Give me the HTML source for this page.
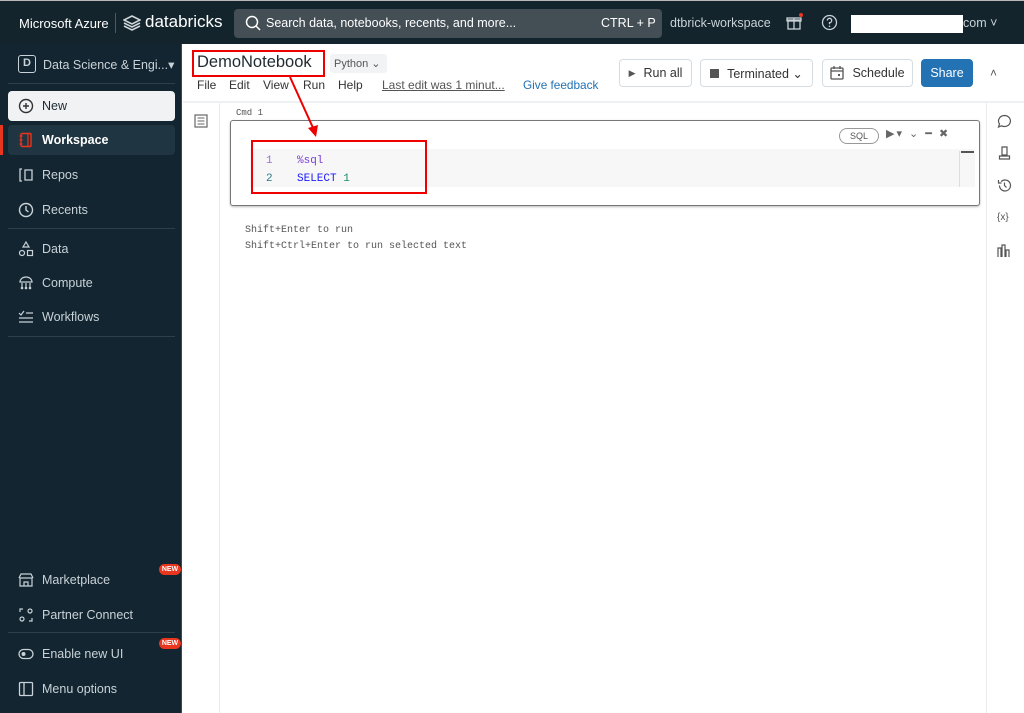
<!DOCTYPE html>
<html><head><meta charset="utf-8"><style>
*{margin:0;padding:0;box-sizing:border-box}
body{width:1024px;height:713px;overflow:hidden;background:#fff;font-family:"Liberation Sans",sans-serif;position:relative}
.a{position:absolute}
.top{left:0;top:0;width:1024px;height:44px;background:#13242c;border-top:1px solid #b8b8b8}
.side{left:0;top:44px;width:182px;height:669px;background:#132530;border-right:1px solid #3a4a52}
.si{position:absolute;left:8px;width:167px;height:30px;color:#c9d2d8;font-size:12.5px;display:flex;align-items:center;padding-left:10px;gap:8px}
.si svg{width:16px;height:16px;flex:none}
.hr{position:absolute;left:8px;width:167px;height:1px;background:#2d3f48}
.btn{position:absolute;top:59px;height:28px;border:1px solid #d6dde2;border-radius:4px;font-size:12.5px;color:#333;display:flex;align-items:center;justify-content:center;gap:8px;background:#fff}
.mono{font-family:"Liberation Mono",monospace}
.new{position:absolute;left:159px;width:22px;height:11px;background:#e8361f;border-radius:6px;color:#fff;font-size:7px;font-weight:bold;text-align:center;line-height:11px}
</style></head><body>
<div class="a top">
 <div class="a" style="left:19px;top:15px;color:#fff;font-size:13px">Microsoft Azure</div>
 <div class="a" style="left:115px;top:12px;width:1px;height:20px;background:#4a5a62"></div>
 <svg class="a" style="left:123px;top:14px" width="18" height="17" viewBox="0 0 18 17"><path d="M9 1 L17 5 L9 9 L1 5Z M1 8 L9 12 L17 8 M1 11 L9 15 L17 11" fill="none" stroke="#cfd6da" stroke-width="1.6"/></svg>
 <div class="a" style="left:145px;top:11px;color:#fff;font-size:17px">databricks</div>
 <div class="a" style="left:234px;top:8px;width:428px;height:29px;background:#434e55;border-radius:4px"></div>
 <svg class="a" style="left:245px;top:14px" width="16" height="16" viewBox="0 0 16 16"><circle cx="7" cy="7" r="5.5" fill="none" stroke="#fff" stroke-width="1.5"/><path d="M11 11l4 4" stroke="#fff" stroke-width="1.5"/></svg>
 <div class="a" style="left:266px;top:15px;color:#fff;font-size:12.5px">Search data, notebooks, recents, and more...</div>
 <div class="a" style="left:601px;top:15px;color:#fff;font-size:12.5px">CTRL + P</div>
 <div class="a" style="left:670px;top:15px;color:#c9d2d8;font-size:12.5px">dtbrick-workspace</div>
 <svg class="a" style="left:786px;top:13px" width="16" height="17" viewBox="0 0 16 17"><rect x="2" y="6" width="12" height="9" fill="none" stroke="#c9d2d8" stroke-width="1.3"/><rect x="1" y="4" width="14" height="3" fill="none" stroke="#c9d2d8" stroke-width="1.3"/><path d="M8 4v11" stroke="#c9d2d8" stroke-width="1.3"/></svg>
 <div class="a" style="left:799px;top:12px;width:4px;height:4px;border-radius:2px;background:#e8361f"></div>
 <svg class="a" style="left:821px;top:13px" width="17" height="17" viewBox="0 0 17 17"><circle cx="8.5" cy="8.5" r="7" fill="none" stroke="#c9d2d8" stroke-width="1.3"/><path d="M6.3 6.5a2.2 2.2 0 1 1 2.2 2.2v1.5" fill="none" stroke="#c9d2d8" stroke-width="1.3"/><circle cx="8.5" cy="12.3" r=".8" fill="#c9d2d8"/></svg>
 <div class="a" style="left:851px;top:14px;width:112px;height:18px;background:#fff"></div>
 <div class="a" style="left:963px;top:15px;color:#c9d2d8;font-size:12.5px">com ˅</div>
</div>
<div class="a side">
 <div class="a" style="left:18px;top:11px;width:18px;height:18px;border:1.5px solid #c9d2d8;border-radius:3px;color:#c9d2d8;font-size:11px;font-weight:bold;text-align:center;line-height:15px">D</div>
 <div class="a" style="left:43px;top:13px;color:#c9d2d8;font-size:12.5px">Data Science &amp; Engi...▾</div>
 <div class="hr" style="top:39px"></div>
 <div class="si" style="top:47px;background:#f0f2f4;color:#1b2a32;border-radius:4px"><svg viewBox="0 0 16 16"><circle cx="8" cy="8" r="6.5" fill="none" stroke="#333" stroke-width="1.4"/><path d="M8 5v6M5 8h6" stroke="#333" stroke-width="1.4"/></svg>New</div>
 <div class="a" style="left:0;top:81px;width:3px;height:30px;background:#e8361f"></div>
 <div class="si" style="top:81px;background:#1f3541;color:#fff;font-weight:bold;border-radius:4px"><svg viewBox="0 0 16 16"><rect x="3" y="1.5" width="10" height="13" rx="1" fill="none" stroke="#e8361f" stroke-width="1.4"/><path d="M1.5 4h3M1.5 8h3M1.5 12h3M10 2v12" stroke="#e8361f" stroke-width="1.2"/></svg>Workspace</div>
 <div class="si" style="top:116px"><svg viewBox="0 0 16 16"><path d="M4 2H2v12h2M7 3h7v10H7z" fill="none" stroke="#c9d2d8" stroke-width="1.3"/></svg>Repos</div>
 <div class="si" style="top:151px"><svg viewBox="0 0 16 16"><circle cx="8" cy="8" r="6.5" fill="none" stroke="#c9d2d8" stroke-width="1.4"/><path d="M8 4v4l2.5 2" fill="none" stroke="#c9d2d8" stroke-width="1.4"/></svg>Recents</div>
 <div class="hr" style="top:184px"></div>
 <div class="si" style="top:190px"><svg viewBox="0 0 16 16"><path d="M8 1l3 5H5z" fill="none" stroke="#c9d2d8" stroke-width="1.2"/><circle cx="4" cy="12" r="2.5" fill="none" stroke="#c9d2d8" stroke-width="1.2"/><rect x="9.5" y="9.5" width="5" height="5" fill="none" stroke="#c9d2d8" stroke-width="1.2"/></svg>Data</div>
 <div class="si" style="top:224px"><svg viewBox="0 0 16 16"><path d="M2 7a6 5 0 0 1 12 0zM4 8v4M8 8v4M12 8v4" fill="none" stroke="#c9d2d8" stroke-width="1.2"/><circle cx="4" cy="13" r="1.3" fill="#c9d2d8"/><circle cx="8" cy="13" r="1.3" fill="#c9d2d8"/><circle cx="12" cy="13" r="1.3" fill="#c9d2d8"/></svg>Compute</div>
 <div class="si" style="top:258px"><svg viewBox="0 0 16 16"><path d="M1 4l2 2 3-4M8 4h7M1 9h14M1 13h14" fill="none" stroke="#c9d2d8" stroke-width="1.2"/></svg>Workflows</div>
 <div class="hr" style="top:292px"></div>
 <div class="si" style="top:521px"><svg viewBox="0 0 16 16"><path d="M2 6h12v8H2zM1 6l2-4h10l2 4M6 14v-4h4v4" fill="none" stroke="#c9d2d8" stroke-width="1.2"/></svg>Marketplace</div>
 <div class="new" style="top:520px">NEW</div>
 <div class="si" style="top:556px"><svg viewBox="0 0 16 16"><path d="M2 5V2h3M11 14h3v-3" fill="none" stroke="#c9d2d8" stroke-width="1.2"/><circle cx="4" cy="12" r="2" fill="none" stroke="#c9d2d8" stroke-width="1.2"/><circle cx="12" cy="4" r="2" fill="none" stroke="#c9d2d8" stroke-width="1.2"/></svg>Partner Connect</div>
 <div class="hr" style="top:588px"></div>
 <div class="si" style="top:595px"><svg viewBox="0 0 16 16"><rect x="1" y="3.5" width="14" height="9" rx="4.5" fill="none" stroke="#c9d2d8" stroke-width="1.3"/><circle cx="5.5" cy="8" r="2" fill="#c9d2d8"/></svg>Enable new UI</div>
 <div class="new" style="top:594px">NEW</div>
 <div class="si" style="top:630px"><svg viewBox="0 0 16 16"><rect x="1.5" y="1.5" width="13" height="13" rx="1" fill="none" stroke="#c9d2d8" stroke-width="1.3"/><path d="M6 1.5v13" stroke="#c9d2d8" stroke-width="1.3"/></svg>Menu options</div>
</div>
<!-- header -->
<div class="a" style="left:183px;top:101px;width:841px;height:2px;background:#eef1f3"></div>
<div class="a" style="left:197px;top:53px;font-size:16.5px;color:#1f2a30">DemoNotebook</div>
<div class="a" style="left:192px;top:50px;width:133px;height:27px;border:2px solid #e00"></div>
<div class="a" style="left:330px;top:54px;width:57px;height:19px;background:#f1f3f4;border-radius:3px;font-size:11px;color:#555;padding:3px 4px">Python ⌄</div>
<div class="a" style="left:197px;top:78px;font-size:12px;color:#333">File</div>
<div class="a" style="left:229px;top:78px;font-size:12px;color:#333">Edit</div>
<div class="a" style="left:263px;top:78px;font-size:12px;color:#333">View</div>
<div class="a" style="left:303px;top:78px;font-size:12px;color:#333">Run</div>
<div class="a" style="left:338px;top:78px;font-size:12px;color:#333">Help</div>
<div class="a" style="left:382px;top:78px;font-size:12px;color:#555;text-decoration:underline">Last edit was 1 minut...</div>
<div class="a" style="left:523px;top:78px;font-size:11.8px;color:#2272b4">Give feedback</div>
<div class="btn" style="left:619px;width:73px"><span style="font-size:9px;color:#555">▶</span>Run all</div>
<div class="btn" style="left:700px;width:113px"><span style="display:inline-block;width:9px;height:9px;background:#555"></span>Terminated ⌄</div>
<div class="btn" style="left:822px;width:91px"><svg width="14" height="14" viewBox="0 0 14 14"><rect x="1" y="2" width="12" height="11" rx="1" fill="none" stroke="#555" stroke-width="1.3"/><path d="M1 5h12M4 0v3M10 0v3" stroke="#555" stroke-width="1.3"/><rect x="8" y="8" width="2" height="2" fill="#555"/></svg>Schedule</div>
<div class="btn" style="left:921px;width:52px;background:#2272b4;border-color:#2272b4;color:#fff">Share</div>
<div class="a" style="left:990px;top:66px;font-size:12px;color:#555">˄</div>
<!-- gutters -->
<div class="a" style="left:219px;top:103px;width:1px;height:610px;background:#e8ecef"></div>
<div class="a" style="left:986px;top:103px;width:1px;height:610px;background:#e8ecef"></div>
<svg class="a" style="left:194px;top:114px" width="14" height="14" viewBox="0 0 14 14"><rect x="1" y="1" width="12" height="12" fill="none" stroke="#666" stroke-width="1.2"/><path d="M3.5 4h7M3.5 7h7M3.5 10h7" stroke="#666" stroke-width="1"/></svg>
<!-- right icons -->
<svg class="a" style="left:997px;top:114px" width="15" height="15" viewBox="0 0 15 15"><path d="M7.5 1.5a6 5.5 0 1 1-3 10.3L1.5 13l1-3A6 5.5 0 0 1 7.5 1.5z" fill="none" stroke="#555" stroke-width="1.2"/></svg>
<svg class="a" style="left:998px;top:146px" width="13" height="15" viewBox="0 0 13 15"><path d="M4 1h5v8H4zM1.5 10h10v3h-10z" fill="none" stroke="#555" stroke-width="1.2"/></svg>
<svg class="a" style="left:997px;top:178px" width="15" height="15" viewBox="0 0 15 15"><path d="M2.5 7.5a5.5 5.5 0 1 0 1.6-3.9M1.5 2v3h3M7.5 4.5v3l2 2" fill="none" stroke="#555" stroke-width="1.2"/></svg>
<div class="a" style="left:997px;top:212px;font-size:10px;color:#555">{x}</div>
<svg class="a" style="left:997px;top:243px" width="14" height="15" viewBox="0 0 14 15"><path d="M1 14V5h3v9M5 14V2h3v12M9 14V7h3v7" fill="none" stroke="#555" stroke-width="1.2"/></svg>
<!-- cell -->
<div class="a mono" style="left:236px;top:108px;font-size:9px;color:#555">Cmd 1</div>
<div class="a" style="left:230px;top:120px;width:750px;height:86px;border:1.5px solid #777;border-radius:3px;box-shadow:0 1px 2px #bbb"></div>
<div class="a" style="left:839px;top:128px;width:40px;height:16px;border:1px solid #999;border-radius:8px;font-size:9px;color:#555;text-align:center;line-height:14px">SQL</div>
<div class="a" style="left:886px;top:127px;font-size:11px;color:#666;letter-spacing:2px">▶▾ ⌄ ━ ✖</div>
<div class="a" style="left:250px;top:149px;width:725px;height:38px;background:#f7f7f7"></div>
<div class="a" style="left:959px;top:151px;width:1px;height:36px;background:#ddd"></div>
<div class="a" style="left:961px;top:151px;width:13px;height:2px;background:#555"></div>
<div class="a mono" style="left:266px;top:152px;font-size:11px;color:#9b6fd3;line-height:18px">1</div>
<div class="a mono" style="left:266px;top:170px;font-size:11px;color:#2a7a8a;line-height:18px">2</div>
<div class="a mono" style="left:297px;top:152px;font-size:11px;color:#7a3fd6;line-height:18px">%sql</div>
<div class="a mono" style="left:297px;top:170px;font-size:11px;color:#1a1aff;line-height:18px">SELECT <span style="color:#1a8a6a">1</span></div>
<div class="a" style="left:251px;top:140px;width:176px;height:54px;border:2px solid #e00"></div>
<svg class="a" style="left:280px;top:74px" width="50" height="70" viewBox="0 0 50 70"><path d="M10 3 L34 56" stroke="#e00" stroke-width="2"/><path d="M28 54 L36 63 L38 51z" fill="#e00"/></svg>
<div class="a mono" style="left:245px;top:223px;font-size:10px;color:#555;line-height:16px">Shift+Enter to run<br>Shift+Ctrl+Enter to run selected text</div>
</body></html>
